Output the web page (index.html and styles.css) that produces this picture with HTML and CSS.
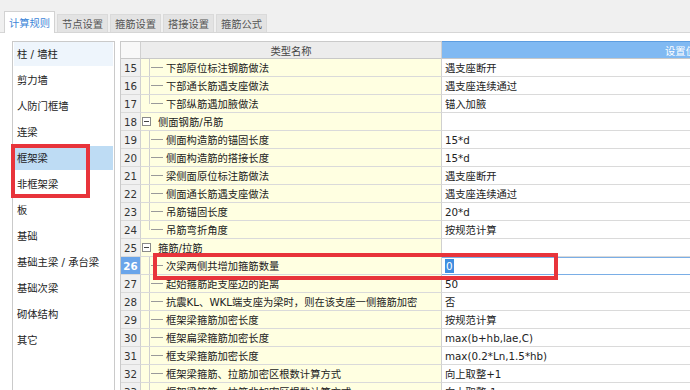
FILE: index.html
```html
<!DOCTYPE html>
<html lang="zh-CN">

<head>
    <meta charset="UTF-8">
    <title>计算规则</title>
    <link rel="stylesheet" href="styles.css">
</head>

<body>
    <!-- Tabs -->
    <div class="tabs">
        <div class="tab active">计算规则</div>
        <div class="tab">节点设置</div>
        <div class="tab">箍筋设置</div>
        <div class="tab">搭接设置</div>
        <div class="tab">箍筋公式</div>
    </div>

    <div class="panel">
        <!-- Component list -->
        <ul class="side">
            <li class="hover">柱 / 墙柱</li>
            <li>剪力墙</li>
            <li>人防门框墙</li>
            <li>连梁</li>
            <li class="sel">框架梁</li>
            <li>非框架梁</li>
            <li>板</li>
            <li>基础</li>
            <li>基础主梁 / 承台梁</li>
            <li>基础次梁</li>
            <li>砌体结构</li>
            <li>其它</li>
        </ul>

        <!-- Rules grid -->
        <div class="grid">
            <div class="row head">
                <div class="cell num"></div>
                <div class="cell name">类型名称</div>
                <div class="cell val">设置值</div>
            </div>
            <div class="row">
                <div class="cell num">15</div>
                <div class="cell name"><span class="tree"></span>下部原位标注钢筋做法</div>
                <div class="cell val">遇支座断开</div>
            </div>
            <div class="row">
                <div class="cell num">16</div>
                <div class="cell name"><span class="tree"></span>下部通长筋遇支座做法</div>
                <div class="cell val">遇支座连续通过</div>
            </div>
            <div class="row">
                <div class="cell num">17</div>
                <div class="cell name"><span class="tree end"></span>下部纵筋遇加腋做法</div>
                <div class="cell val">锚入加腋</div>
            </div>
            <div class="row">
                <div class="cell num">18</div>
                <div class="cell name"><span class="box"></span>侧面钢筋/吊筋</div>
                <div class="cell val"></div>
            </div>
            <div class="row">
                <div class="cell num">19</div>
                <div class="cell name"><span class="tree"></span>侧面构造筋的锚固长度</div>
                <div class="cell val">15*d</div>
            </div>
            <div class="row">
                <div class="cell num">20</div>
                <div class="cell name"><span class="tree"></span>侧面构造筋的搭接长度</div>
                <div class="cell val">15*d</div>
            </div>
            <div class="row">
                <div class="cell num">21</div>
                <div class="cell name"><span class="tree"></span>梁侧面原位标注筋做法</div>
                <div class="cell val">遇支座断开</div>
            </div>
            <div class="row">
                <div class="cell num">22</div>
                <div class="cell name"><span class="tree"></span>侧面通长筋遇支座做法</div>
                <div class="cell val">遇支座连续通过</div>
            </div>
            <div class="row">
                <div class="cell num">23</div>
                <div class="cell name"><span class="tree"></span>吊筋锚固长度</div>
                <div class="cell val">20*d</div>
            </div>
            <div class="row">
                <div class="cell num">24</div>
                <div class="cell name"><span class="tree end"></span>吊筋弯折角度</div>
                <div class="cell val">按规范计算</div>
            </div>
            <div class="row">
                <div class="cell num">25</div>
                <div class="cell name"><span class="box"></span>箍筋/拉筋</div>
                <div class="cell val"></div>
            </div>
            <div class="row current">
                <div class="cell num">26</div>
                <div class="cell name"><span class="tree"></span>次梁两侧共增加箍筋数量</div>
                <div class="cell val"><span class="picked">0</span></div>
            </div>
            <div class="row">
                <div class="cell num">27</div>
                <div class="cell name"><span class="tree"></span>起始箍筋距支座边的距离</div>
                <div class="cell val">50</div>
            </div>
            <div class="row">
                <div class="cell num">28</div>
                <div class="cell name"><span class="tree"></span>抗震KL、WKL端支座为梁时，则在该支座一侧箍筋加密</div>
                <div class="cell val">否</div>
            </div>
            <div class="row">
                <div class="cell num">29</div>
                <div class="cell name"><span class="tree"></span>框架梁箍筋加密长度</div>
                <div class="cell val">按规范计算</div>
            </div>
            <div class="row">
                <div class="cell num">30</div>
                <div class="cell name"><span class="tree"></span>框架扁梁箍筋加密长度</div>
                <div class="cell val">max(b+hb,lae,C)</div>
            </div>
            <div class="row">
                <div class="cell num">31</div>
                <div class="cell name"><span class="tree"></span>框支梁箍筋加密长度</div>
                <div class="cell val">max(0.2*Ln,1.5*hb)</div>
            </div>
            <div class="row">
                <div class="cell num">32</div>
                <div class="cell name"><span class="tree"></span>框架梁箍筋、拉筋加密区根数计算方式</div>
                <div class="cell val">向上取整+1</div>
            </div>
            <div class="row">
                <div class="cell num">33</div>
                <div class="cell name"><span class="tree"></span>框架梁箍筋、拉筋非加密区根数计算方式</div>
                <div class="cell val">向上取整-1</div>
            </div>
        </div>
    </div>

    <!-- Red annotation boxes -->
    <div class="mark mark-side"></div>
    <div class="mark mark-row"></div>
</body>

</html>
```

FILE: styles.css
```css
body {
    margin: 0;
    width: 690px;
    height: 390px;
    overflow: hidden;
    position: relative;
    background-color: #ffffff;
    color: #222222;
    font-family: "DejaVu Sans", "Noto Sans CJK SC", sans-serif;
    font-size: 10.3px;
}

/* Tabs */
.tabs {
    height: 32px;
    background-color: #f0f0f0;
    border-bottom: 1px solid #d6d6d6;
    display: flex;
    align-items: flex-end;
    gap: 2px;
    padding-left: 4px;
}

.tab {
    width: 51px;
    height: 18px;
    box-sizing: border-box;
    background-color: #e3e3e3;
    color: #555555;
    border: 1px solid #dadada;
    border-bottom: none;
    display: flex;
    align-items: center;
    justify-content: center;
}

.tab.active {
    height: 22px;
    margin-bottom: -1px;
    background-color: #ffffff;
    color: #3d86d8;
    border-color: #d2d2d2;
}

/* Panel */
.panel {
    display: flex;
    align-items: flex-start;
    gap: 5px;
    padding: 8px 0 0 12px;
}

.side {
    width: 103px;
    height: 380px;
    box-sizing: border-box;
    flex: none;
    margin: 0;
    padding: 0 1px;
    list-style: none;
    border: 1px solid #cacaca;
}

.side li {
    height: 24px;
    line-height: 24px;
    padding-left: 3px;
    margin-bottom: 2px;
    white-space: nowrap;
}

.side li.hover {
    background-color: #eef5fc;
}

.side li.sel {
    background-color: #bedcf4;
}

/* Grid */
.grid {
    flex: none;
    width: 800px;
    border-left: 1px solid #cacaca;
}

.row {
    display: flex;
    height: 18px;
}

.cell {
    box-sizing: border-box;
    height: 18px;
    flex: none;
    display: flex;
    align-items: center;
    white-space: nowrap;
    overflow: hidden;
    border-bottom: 1px solid #dadada;
}

.num {
    width: 20px;
    justify-content: center;
    background-color: #f0f0f0;
    border-right: 1px solid #d0d0d0;
    color: #333333;
}

.name {
    width: 301px;
    background-color: #ffffe1;
    border-right: 1px solid #d0d0d0;
}

.val {
    width: 474px;
    padding-left: 3px;
}

.head .cell {
    border-top: 1px solid #cacaca;
    border-bottom: 1px solid #c8c8c8;
    color: #444444;
}

.head .num {
    background-color: #f8f8f8;
}

.head .name {
    background-color: #ececec;
    justify-content: center;
}

.head .val {
    justify-content: center;
    background-color: #80b9f2;
    border-top-color: #5d9de0;
    color: #ffffff;
}

.current .num {
    background-color: #6aa5ea;
    color: #ffffff;
    font-weight: bold;
}

.current .val {
    border-top: 1px solid #7aaee6;
    border-bottom-color: #7aaee6;
}

.picked {
    background-color: #3f8ee0;
    color: #ffffff;
    line-height: 14px;
    padding: 0 1px;
}

/* Tree lines */
.tree {
    flex: none;
    width: 14px;
    height: 17px;
    margin: 0 3px 0 8px;
    background:
        linear-gradient(#cfcfcf, #cfcfcf) 0 0 / 1px 100% no-repeat,
        linear-gradient(#9a9a9a, #9a9a9a) 2px 8px / 12px 1px no-repeat;
}

.tree.end {
    background-size: 1px 9px, 12px 1px;
}

.box {
    flex: none;
    width: 9px;
    height: 9px;
    box-sizing: border-box;
    margin: 0 7px 0 1px;
    border: 1px solid #8a8a8a;
    background: linear-gradient(#444444, #444444) center / 5px 1px no-repeat, #ffffff;
}

/* Red annotation boxes */
.mark {
    position: absolute;
    box-sizing: border-box;
    border: 4px solid #e8343b;
}

.mark-side {
    left: 11px;
    top: 144px;
    width: 79px;
    height: 54px;
}

.mark-row {
    left: 153px;
    top: 253px;
    width: 405px;
    height: 27px;
}
```
